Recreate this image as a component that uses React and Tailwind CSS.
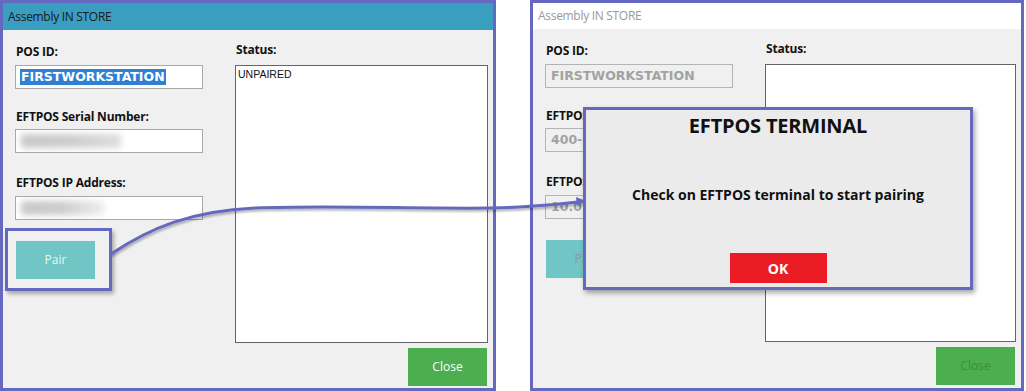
import React from "react";

function Window({ active }) {
  const label = "block h-[16px] leading-[16px] text-[12px] font-bold text-[#111] font-['Open_Sans',sans-serif] tracking-[-0.2px] pl-[1px]";
  return (
    <div className="w-full h-full border-[3px] border-[#6568c0] bg-[#f0f0f0] flex flex-col">
      <div
        className={
          active
            ? "h-[27px] shrink-0 bg-[#399ebf] flex items-center pl-[5px] text-[12px] text-[#1a1a1a] font-['Open_Sans',sans-serif] tracking-[-0.3px]"
            : "h-[26px] shrink-0 bg-white flex items-center pl-[5px] text-[12px] text-[#9a9a9a] font-['Open_Sans',sans-serif] tracking-[-0.3px]"
        }
      >
        Assembly IN STORE
      </div>
      <div className="flex-1 flex flex-row pl-[12px] pr-[5px]">
        <div className="w-[188px] flex flex-col pt-[14px]">
          <span className={label}>POS ID:</span>
          {active ? (
            <div className="mt-[5px] h-[24px] bg-white border border-[#a8a8a8] flex items-center pl-[4px]">
              <span className="bg-[#2f80d2] text-white px-[1px] h-[16px] leading-[16px] text-[12.5px] font-bold font-['DejaVu_Sans',sans-serif]">
                FIRSTWORKSTATION
              </span>
            </div>
          ) : (
            <div className="mt-[5px] h-[24px] bg-[#f0f0f0] border border-[#b4b4b4] flex items-center pl-[5px]">
              <span className="text-[#a2a2a2] h-[16px] leading-[16px] text-[12.5px] font-bold font-['DejaVu_Sans',sans-serif]">
                FIRSTWORKSTATION
              </span>
            </div>
          )}
          <span className={label + " mt-[20px]"}>EFTPOS Serial Number:</span>
          {active ? (
            <div className="mt-[4px] h-[24px] bg-white border border-[#a8a8a8] flex items-center pl-[5px] overflow-hidden">
              <div className="w-[100px] h-[14px] bg-gradient-to-r from-[#c8c8c8] via-[#cdcdcd] to-[#dedede] blur-[3px] rounded-[2px]"></div>
            </div>
          ) : (
            <div className="mt-[4px] h-[24px] bg-[#f0f0f0] border border-[#b4b4b4] flex items-center pl-[5px]">
              <span className="text-[#a2a2a2] text-[12.5px] font-bold font-['DejaVu_Sans',sans-serif]">400-</span>
            </div>
          )}
          <span className={label + " mt-[22px]"}>EFTPOS IP Address:</span>
          {active ? (
            <div className="mt-[5px] h-[24px] bg-white border border-[#a8a8a8] flex items-center pl-[5px] overflow-hidden">
              <div className="w-[84px] h-[14px] bg-gradient-to-r from-[#c8c8c8] via-[#cccccc] to-[#f0f0f0] blur-[3px] rounded-[2px]"></div>
            </div>
          ) : (
            <div className="mt-[5px] h-[24px] bg-[#f0f0f0] border border-[#b4b4b4] flex items-center pl-[5px]">
              <span className="text-[#a2a2a2] text-[12.5px] font-bold font-['DejaVu_Sans',sans-serif]">10.0</span>
            </div>
          )}
          <div
            className={
              "mt-[21px] ml-[1px] w-[79px] h-[38px] bg-[#6fc6c5] flex items-center justify-center text-[12px] font-['Open_Sans',sans-serif] " +
              (active ? "text-[#eaf7f7]" : "text-[#7f9c9c]")
            }
          >
            Pair
          </div>
        </div>
        <div className="ml-[32px] flex-1 flex flex-col pt-[12px]">
          <span className={label}>Status:</span>
          <div className="mt-[7px] h-[278px] bg-white border border-[#646464] pl-[2px] pt-[2px]">
            {active && (
              <span className="block leading-[12px] text-[10.5px] text-[#111] font-['Liberation_Sans',sans-serif]">UNPAIRED</span>
            )}
          </div>
          <div
            className={
              "mt-[5px] self-end mr-[1px] w-[79px] h-[38px] bg-[#4cae4e] flex items-center justify-center text-[12px] font-['Open_Sans',sans-serif] " +
              (active ? "text-white" : "text-[#3f8a41]")
            }
          >
            Close
          </div>
        </div>
      </div>
    </div>
  );
}

export default function App() {
  return (
    <div className="relative w-[1026px] h-[391px] bg-white flex flex-row overflow-hidden">
      <div className="w-[496px] h-[391px] shrink-0">
        <Window active />
      </div>
      <div className="ml-[34px] w-[494px] h-[391px] shrink-0">
        <Window active={false} />
      </div>

      {/* highlight around Pair */}
      <div className="absolute left-[5px] top-[228px] w-[107px] h-[63px] border-[3px] border-[#6568c0] shadow-[2px_3px_4px_rgba(0,0,0,0.3)]"></div>

      {/* connector */}
      <svg className="absolute left-0 top-0 pointer-events-none" width="1026" height="391" viewBox="0 0 1026 391">
        <defs>
          <filter id="sh" x="-10%" y="-50%" width="120%" height="200%">
            <feDropShadow dx="1" dy="2" stdDeviation="1.2" floodColor="#000" floodOpacity="0.3" />
          </filter>
        </defs>
        <g filter="url(#sh)">
          <path
            d="M111 254 C 150 228, 190 211, 255 208 C 330 205, 420 209, 490 208 C 530 207.5, 560 204, 578 202"
            fill="none"
            stroke="#6568c0"
            strokeWidth="3"
          />
          <path d="M586 201 L576 197 L577 206 Z" fill="#6568c0" />
        </g>
      </svg>

      {/* dialog */}
      <div className="absolute left-[583px] top-[107px] w-[390px] h-[183px] border-[3px] border-[#6568c0] bg-[#ebebeb] shadow-[2px_3px_5px_rgba(0,0,0,0.35)] flex flex-col items-center font-['Open_Sans',sans-serif]">
        <div className="mt-[3px] h-[26px] leading-[26px] text-[20px] font-bold text-[#111] tracking-[-0.2px]">EFTPOS TERMINAL</div>
        <div className="mt-[46px] h-[20px] leading-[20px] text-[14px] font-bold text-[#111]">
          Check on EFTPOS terminal to start pairing
        </div>
        <div className="mt-[48px] w-[97px] h-[30px] bg-[#ec1c24] flex items-center justify-center text-white text-[14px] font-bold">
          OK
        </div>
      </div>
    </div>
  );
}
